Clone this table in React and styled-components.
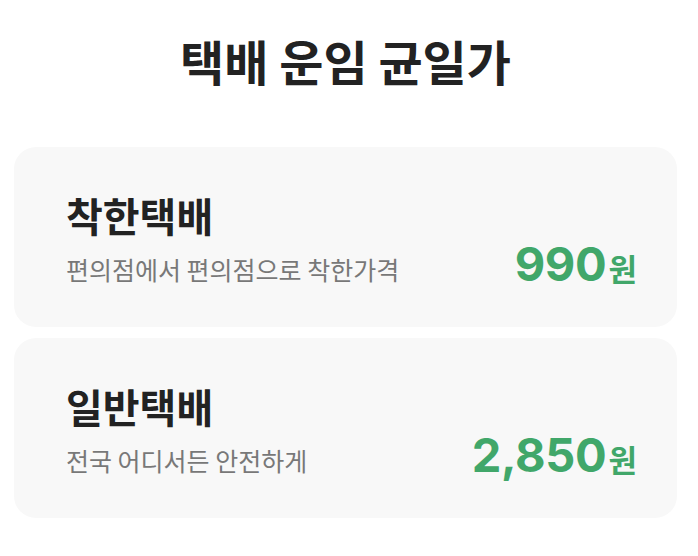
import React from "react";
import styled, { createGlobalStyle } from "styled-components";

const GlobalStyle = createGlobalStyle`
  html, body {
    margin: 0;
    padding: 0;
    background: #ffffff;
    font-family: "Noto Sans CJK KR", "Noto Sans", sans-serif;
  }
`;

const plans = [
  { name: "착한택배", desc: "편의점에서 편의점으로 착한가격", price: "990" },
  { name: "일반택배", desc: "전국 어디서든 안전하게", price: "2,850" },
];

const App = () => {
  return (
    <>
      <GlobalStyle />
      <Page>
        <Title>택배 운임 균일가</Title>
        <CardList>
          {plans.map((p) => (
            <Card key={p.name}>
              <Info>
                <Name>{p.name}</Name>
                <Desc>{p.desc}</Desc>
              </Info>
              <Price>
                {p.price}
                <Unit>원</Unit>
              </Price>
            </Card>
          ))}
        </CardList>
      </Page>
    </>
  );
};

export default App;

const Page = styled.div`
  width: 698px;
  padding: 30px 21px 0 14px;
  box-sizing: border-box;
`;

const Title = styled.h1`
  margin: 0;
  text-align: center;
  font-size: 48px;
  font-weight: 700;
  color: #222222;
  line-height: 60px;
`;

const CardList = styled.div`
  display: flex;
  flex-direction: column;
  gap: 11px;
  margin-top: 57px;
`;

const Card = styled.div`
  display: flex;
  align-items: flex-end;
  justify-content: space-between;
  height: 180px;
  box-sizing: border-box;
  padding: 0 40px 41px 52px;
  background: #f8f8f8;
  border-radius: 22px;
`;

const Info = styled.div`
  display: flex;
  flex-direction: column;
`;

const Name = styled.div`
  font-size: 40px;
  font-weight: 700;
  color: #222222;
  line-height: 48px;
`;

const Desc = styled.div`
  margin-top: 13px;
  font-size: 25px;
  color: #787878;
  line-height: 34px;
`;

const Price = styled.div`
  font-family: Inter, "Noto Sans CJK KR", sans-serif;
  font-size: 47px;
  font-weight: 700;
  color: #41a76a;
  line-height: 44px;
  letter-spacing: -0.3px;
`;

const Unit = styled.span`
  font-family: "Noto Sans CJK KR", sans-serif;
  font-size: 31px;
  font-weight: 700;
  line-height: 1;
  letter-spacing: 0;
  margin-left: 2px;
`;
